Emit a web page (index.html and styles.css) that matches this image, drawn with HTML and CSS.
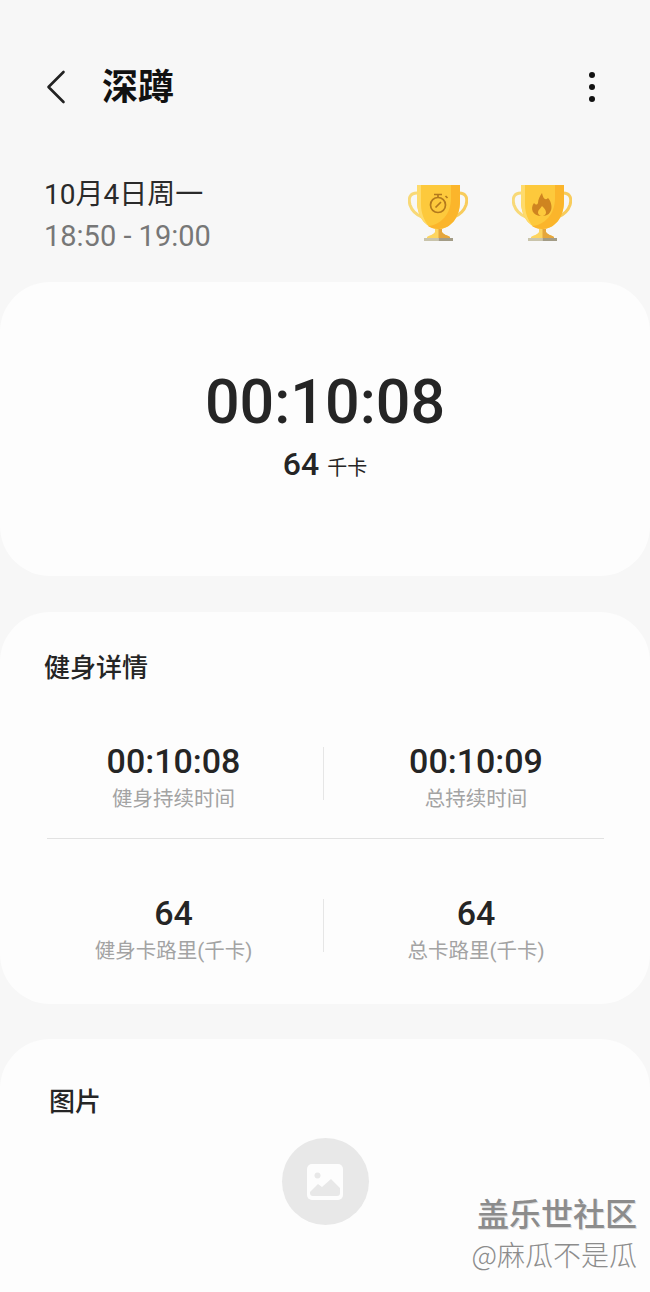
FILE: index.html
```html
<!DOCTYPE html>
<html lang="zh-CN">
<head>
  <meta charset="UTF-8" />
  <meta name="viewport" content="width=device-width, initial-scale=1.0" />
  <title>深蹲</title>
  <link rel="stylesheet" href="styles.css">
</head>
<body>
  <div class="page">
    <header class="topbar">
      <svg class="back" width="22" height="36" viewBox="0 0 22 36"><path d="M18.500 3 L3.500 18 L18.500 33" fill="none" stroke="#222" stroke-width="2.6" stroke-linecap="round" stroke-linejoin="round"/></svg>
      <h1 class="title">深蹲</h1>
      <div class="more"><span></span><span></span><span></span></div>
    </header>

    <section class="summary">
      <div class="when">
        <div class="date">10月4日周一</div>
        <div class="range">18:50 - 19:00</div>
      </div>
      <div class="trophies">
        <svg class="trophy" width="60" height="58" viewBox="0 0 60 58">
          <path d="M9 9 C2 9 0 14 2 21 C4 27 9 31 14 33" fill="none" stroke="#f8d978" stroke-width="3"/>
          <path d="M51 9 C58 9 60 14 58 21 C56 27 51 31 46 33" fill="none" stroke="#f8cc5c" stroke-width="3"/>
          <path d="M9 1 H52 V17 C52 34 42 45 30.500 45 C19 45 9 34 9 17 Z" fill="#fdc93c"/>
          <path d="M43 1 H52 V17 C52 34 42 45 30.500 45 C26 45 23 44 20 42 C33 41 43 30 43 14 Z" fill="#fbb52b"/>
          <path d="M9 1 H13 V20 C13 29 16 36 20 41 C13 37 9 28 9 17 Z" fill="#fedb6c"/>
          <path d="M27 45 H34 V48 C36 51 39 51 42 53 V54 H19 V53 C22 51 25 51 27 48 Z" fill="#fdd560"/>
          <path d="M30.500 45 H34 V48 C36 51 39 51 42 53 V54 H30.500 Z" fill="#e5a63d"/>
          <rect x="16" y="54" width="14.500" height="3" fill="#c9c4ab"/>
          <rect x="30.500" y="54" width="14.500" height="3" fill="#a39c86"/>
          <circle cx="30" cy="21" r="7.500" fill="none" stroke="#b3791d" stroke-width="1.700"/>
          <path d="M26 10.500 H34 M30 10.500 V13 M37.500 12 L39.500 14 M27.500 23.500 L33 18" fill="none" stroke="#b3791d" stroke-width="1.700"/>
        </svg>
        <svg class="trophy" width="60" height="58" viewBox="0 0 60 58">
          <path d="M9 9 C2 9 0 14 2 21 C4 27 9 31 14 33" fill="none" stroke="#f8d978" stroke-width="3"/>
          <path d="M51 9 C58 9 60 14 58 21 C56 27 51 31 46 33" fill="none" stroke="#f8cc5c" stroke-width="3"/>
          <path d="M9 1 H52 V17 C52 34 42 45 30.500 45 C19 45 9 34 9 17 Z" fill="#fdc93c"/>
          <path d="M43 1 H52 V17 C52 34 42 45 30.500 45 C26 45 23 44 20 42 C33 41 43 30 43 14 Z" fill="#fbb52b"/>
          <path d="M9 1 H13 V20 C13 29 16 36 20 41 C13 37 9 28 9 17 Z" fill="#fedb6c"/>
          <path d="M27 45 H34 V48 C36 51 39 51 42 53 V54 H19 V53 C22 51 25 51 27 48 Z" fill="#fdd560"/>
          <path d="M30.500 45 H34 V48 C36 51 39 51 42 53 V54 H30.500 Z" fill="#e5a63d"/>
          <rect x="16" y="54" width="14.500" height="3" fill="#c9c4ab"/>
          <rect x="30.500" y="54" width="14.500" height="3" fill="#a39c86"/>
          <path fill-rule="evenodd" d="M30 9 C31 14 33 17 36 14 C41 19 42 32 30 32 C20 32 18 24 22 19 C24 21 25 21 26 19 C26 15 28 12 30 9 Z M30 22 C28 25 26 26 26 28.500 C26 30.500 28 32 30 32 C32 32 34 30.500 34 28.500 C34 26 32 24 30 22 Z" fill="#cf8420"/>
        </svg>
      </div>
    </section>

    <section class="card total">
      <div class="total-time">00:10:08</div>
      <div class="total-cal">64<span class="unit">千卡</span></div>
    </section>

    <section class="card details">
      <h2 class="card-title">健身详情</h2>
      <div class="stat-row">
        <div class="stat">
          <div class="stat-value">00:10:08</div>
          <div class="stat-label">健身持续时间</div>
        </div>
        <div class="stat">
          <div class="stat-value">00:10:09</div>
          <div class="stat-label">总持续时间</div>
        </div>
      </div>
      <hr class="rule">
      <div class="stat-row">
        <div class="stat">
          <div class="stat-value">64</div>
          <div class="stat-label">健身卡路里(千卡)</div>
        </div>
        <div class="stat">
          <div class="stat-value">64</div>
          <div class="stat-label">总卡路里(千卡)</div>
        </div>
      </div>
    </section>

    <section class="card pictures">
      <h2 class="card-title">图片</h2>
      <div class="add-photo">
        <svg width="36" height="36" viewBox="0 0 36 36">
          <path fill="#fdfdfd" d="M5 0 H31 A5 5 0 0 1 36 5 V31 A5 5 0 0 1 31 36 H5 A5 5 0 0 1 0 31 V5 A5 5 0 0 1 5 0 Z"/>
          <circle cx="10.500" cy="11.500" r="3" fill="#e8e8e8"/>
          <path d="M3 28 L11 20 L15 23 L24 15 L33 24 V29 A3 3 0 0 1 30 32 H6 A3 3 0 0 1 3 29 Z" fill="#e8e8e8"/>
        </svg>
      </div>
    </section>
  </div>

  <div class="watermark">
    <div class="wm-name">盖乐世社区</div>
    <div class="wm-user">@麻瓜不是瓜</div>
  </div>
</body>
</html>
```

FILE: styles.css
```css
* {
  box-sizing: border-box;
}
html, body {
  margin: 0;
  height: 100%;
}
body {
  background: #f7f7f7;
  color: #252525;
  font-family: Roboto, "Noto Sans CJK SC", sans-serif;
  overflow: hidden;
  position: relative;
}
.page {
  display: flex;
  flex-direction: column;
}
.topbar {
  display: flex;
  align-items: center;
  height: 60px;
  margin-top: 57px;
  margin-bottom: 56px;
  padding: 0 0 0 45px;
}
.back {
  flex: none;
}
.title {
  margin: 2px 0 0 35px;
  flex: 1;
  font-size: 36px;
  font-weight: 700;
  line-height: 60px;
  color: #111;
}
.more {
  display: flex;
  flex-direction: column;
  gap: 6px;
  margin-right: 55px;
}
.more span {
  width: 6px;
  height: 6px;
  border-radius: 50%;
  background: #111;
}
.summary {
  display: flex;
  justify-content: space-between;
  align-items: flex-start;
  height: 109px;
  padding: 0 78px 0 44px;
}
.when {
  padding-top: 2px;
}
.date {
  font-size: 28px;
  line-height: 40px;
  color: #2a2a2a;
}
.range {
  font-size: 29px;
  line-height: 42px;
  color: #777;
}
.trophies {
  display: flex;
  gap: 44px;
  margin-top: 11px;
}
.card {
  background: #fdfdfd;
  border-radius: 50px;
}
.total {
  height: 294px;
  display: flex;
  flex-direction: column;
  align-items: center;
  padding-top: 84px;
}
.total-time {
  font-size: 61px;
  font-weight: 500;
  line-height: 72px;
}
.total-cal {
  margin-top: 6px;
  font-size: 32px;
  font-weight: 500;
  line-height: 40px;
}
.unit {
  margin-left: 8px;
  font-size: 20px;
  font-weight: 400;
}
.details {
  margin-top: 36px;
  height: 392px;
  padding: 0 46px;
}
.card-title {
  margin: 0;
  font-size: 26px;
  font-weight: 500;
  line-height: 36px;
  color: #252525;
}
.details .card-title {
  margin: 38px 0 0 -2px;
}
.stat-row {
  display: grid;
  grid-template-columns: 1fr 1fr;
  margin: 0 -22px 0 -24px;
}
.details .card-title + .stat-row {
  margin-top: 61px;
}
.stat {
  height: 53px;
  padding-left: 2px;
  display: flex;
  flex-direction: column;
  align-items: center;
}
.stat:first-child {
  border-right: 1px solid #e6e6e6;
}
.stat-value {
  font-size: 34px;
  font-weight: 500;
  line-height: 38px;
  margin-top: -5px;
}
.stat-label {
  font-size: 20.500px;
  line-height: 38px;
  color: #a3a3a3;
  white-space: nowrap;
}
.rule {
  height: 1px;
  margin: 38px 0 60px 1px;
  border: 0;
  background: #e2e2e2;
}
.pictures {
  margin-top: 35px;
  height: 300px;
  padding: 45px 49px 0;
}
.add-photo {
  width: 87px;
  height: 87px;
  margin: 18px auto 0;
  border-radius: 50%;
  background: #e8e8e8;
  display: flex;
  align-items: center;
  justify-content: center;
}
.watermark {
  position: absolute;
  right: 13px;
  bottom: 16px;
  text-align: right;
  color: #8c8c8c;
  font-family: "Noto Sans CJK SC", sans-serif;
}
.wm-name {
  font-size: 32px;
  line-height: 40px;
  font-weight: 500;
  text-shadow: 1px 1px 0 #ddd;
}
.wm-user {
  font-size: 28px;
  font-weight: 300;
  line-height: 44px;
}
```
